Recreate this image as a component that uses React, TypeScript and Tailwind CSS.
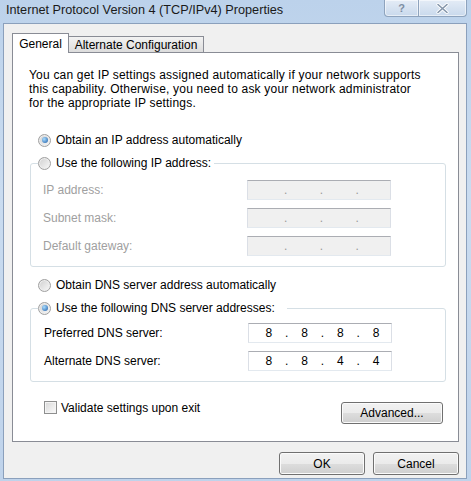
import React from "react";

const FONT = "font-['Liberation_Sans',Arial,sans-serif]";

function Radio({ checked }: { checked?: boolean }) {
  return (
    <span className="flex h-[13px] w-[13px] shrink-0 items-center justify-center rounded-full border border-[#a0a0a0] bg-[linear-gradient(135deg,#cfcfcf,#f9f9f9)] shadow-[inset_0_0_0_1px_#eeeeee]">
      {checked && (
        <span className="h-[6px] w-[6px] rounded-full bg-[radial-gradient(circle_at_35%_35%,#a9ddff,#1d5ba6)]" />
      )}
    </span>
  );
}

function Checkbox() {
  return (
    <span className="h-[13px] w-[13px] shrink-0 border border-[#8e8f8f] bg-[linear-gradient(135deg,#d8d8d8,#fbfbfb)] shadow-[inset_0_0_0_1px_#f4f4f4]" />
  );
}

function IpField({ parts, disabled }: { parts?: string[]; disabled?: boolean }) {
  const cells = parts ?? ["", "", "", ""];
  return (
    <div
      className={`flex h-[20px] w-[144px] items-center border border-t-[#abadb3] border-x-[#dbdfe6] border-b-[#e3e9ef] pl-[5px] text-[12px] ${
        disabled ? "bg-[#f0f0f0] text-[#9a9a9a]" : "bg-white text-black"
      }`}
    >
      {cells.map((c, i) => (
        <React.Fragment key={i}>
          {i > 0 && <span className="w-[6px] text-center">.</span>}
          <span className="w-[30px] text-center">{c}</span>
        </React.Fragment>
      ))}
    </div>
  );
}

function Button({ children, className }: { children: React.ReactNode; className: string }) {
  return (
    <div
      className={`flex items-center justify-center rounded-[3px] border border-[#707070] bg-[linear-gradient(180deg,#f2f2f2_0%,#ebebeb_50%,#dddddd_51%,#cfcfcf_100%)] shadow-[inset_0_0_0_1px_#fbfbfb] text-[12px] text-black ${className}`}
    >
      {children}
    </div>
  );
}

function Row({ label, parts, disabled }: { label: string; parts?: string[]; disabled?: boolean }) {
  return (
    <div className="flex h-[20px] items-center">
      <span className={`w-[204px] ${disabled ? "text-[#a0a0a0]" : "text-black"}`}>{label}</span>
      <IpField parts={parts} disabled={disabled} />
    </div>
  );
}

export default function App() {
  return (
    <div
      className={`${FONT} flex h-[481px] w-[471px] flex-col bg-[linear-gradient(180deg,#bcd2eb_0%,#cadcf0_40%,#bfd3eb_100%)] text-[12px] leading-[14px] text-black`}
    >
      {/* title bar */}
      <div className="flex h-[23px] shrink-0 items-start pl-[6px]">
        <span className="mt-[3px] text-[12.7px] leading-[15px] text-[#1a1a1a]">
          Internet Protocol Version 4 (TCP/IPv4) Properties
        </span>
        <div className="ml-auto mr-[4px] flex">
          <div className="flex h-[17px] w-[35px] items-center justify-center rounded-bl-[4px] border border-t-0 border-[#8ea3bd] bg-[linear-gradient(180deg,#e4ecf6,#c9d9ec)] shadow-[inset_0_0_0_1px_rgba(255,255,255,0.55)]">
            <span className="text-[11px] font-bold leading-[11px] text-[#7d8ea3]">?</span>
          </div>
          <div className="flex h-[17px] w-[48px] items-center justify-center rounded-br-[4px] border border-l-0 border-t-0 border-[#8ea3bd] bg-[linear-gradient(180deg,#e4ecf6,#c9d9ec)] shadow-[inset_0_0_0_1px_rgba(255,255,255,0.55)]">
            <svg width="13" height="11" viewBox="0 0 13 11">
              <path d="M2 1.5 L11 9.5 M11 1.5 L2 9.5" stroke="#ffffff" strokeWidth="3.2" strokeLinecap="round" />
              <path d="M2 1.5 L11 9.5 M11 1.5 L2 9.5" stroke="#8495aa" strokeWidth="1.6" strokeLinecap="round" />
            </svg>
          </div>
        </div>
      </div>

      {/* client area */}
      <div className="mb-[2px] ml-[3px] mr-[4px] flex flex-1 flex-col border border-[#8ba0bc] bg-[#f0f0f0] pl-[8px] pr-[7px] pt-[9px]">
        {/* tabs */}
        <div className="flex h-[19px] items-end">
          <div className="relative z-10 -mb-px flex h-[20px] w-[57px] items-center justify-center border border-b-0 border-[#898c95] bg-white">
            General
          </div>
          <div className="flex h-[16px] w-[135px] items-center justify-center border border-b-0 border-l-0 border-[#898c95] bg-[linear-gradient(180deg,#f3f3f3,#dcdcdc)]">
            Alternate Configuration
          </div>
        </div>

        {/* panel */}
        <div className="flex h-[390px] flex-col border border-[#898c95] bg-white">
          <p className="pl-[16px] pt-[15px] tracking-[0.2px]">
            You can get IP settings assigned automatically if your network supports
            <br />
            this capability. Otherwise, you need to ask your network administrator
            <br />
            for the appropriate IP settings.
          </p>

          <div className="mt-[23px] flex h-[14px] items-center gap-[5px] pl-[25px]">
            <Radio checked />
            <span>Obtain an IP address automatically</span>
          </div>

          <fieldset className="ml-[17px] mr-[12px] mt-[9px] rounded-[3px] border border-[#d5dfe5] pb-[10px] pl-[12px]">
            <legend className="-ml-[5px] pr-[3px]">
              <span className="flex h-[14px] items-center gap-[5px]">
                <Radio />
                <span>Use the following IP address:</span>
              </span>
            </legend>
            <div className="mt-[10px] flex flex-col gap-[8px]">
              <Row label="IP address:" disabled />
              <Row label="Subnet mask:" disabled />
              <Row label="Default gateway:" disabled />
            </div>
          </fieldset>

          <div className="mt-[11px] flex h-[14px] items-center gap-[5px] pl-[25px]">
            <Radio />
            <span>Obtain DNS server address automatically</span>
          </div>

          <fieldset className="ml-[17px] mr-[12px] mt-[9px] rounded-[3px] border border-[#d5dfe5] pb-[10px] pl-[13px]">
            <legend className="-ml-[6px] pr-[12px]">
              <span className="flex h-[14px] items-center gap-[5px]">
                <Radio checked />
                <span>Use the following DNS server addresses:</span>
              </span>
            </legend>
            <div className="mt-[8px] flex flex-col gap-[8px]">
              <Row label="Preferred DNS server:" parts={["8", "8", "8", "8"]} />
              <Row label="Alternate DNS server:" parts={["8", "8", "4", "4"]} />
            </div>
          </fieldset>

          <div className="mt-[19px] flex items-start justify-between pl-[31px] pr-[15px]">
            <div className="flex h-[13px] items-center gap-[4px]">
              <Checkbox />
              <span>Validate settings upon exit</span>
            </div>
            <Button className="mt-[1px] h-[22px] w-[102px]">Advanced...</Button>
          </div>
        </div>

        {/* dialog buttons */}
        <div className="mt-[10px] flex justify-end gap-[8px]">
          <Button className="h-[23px] w-[86px]">OK</Button>
          <Button className="h-[23px] w-[86px]">Cancel</Button>
        </div>
      </div>
    </div>
  );
}
